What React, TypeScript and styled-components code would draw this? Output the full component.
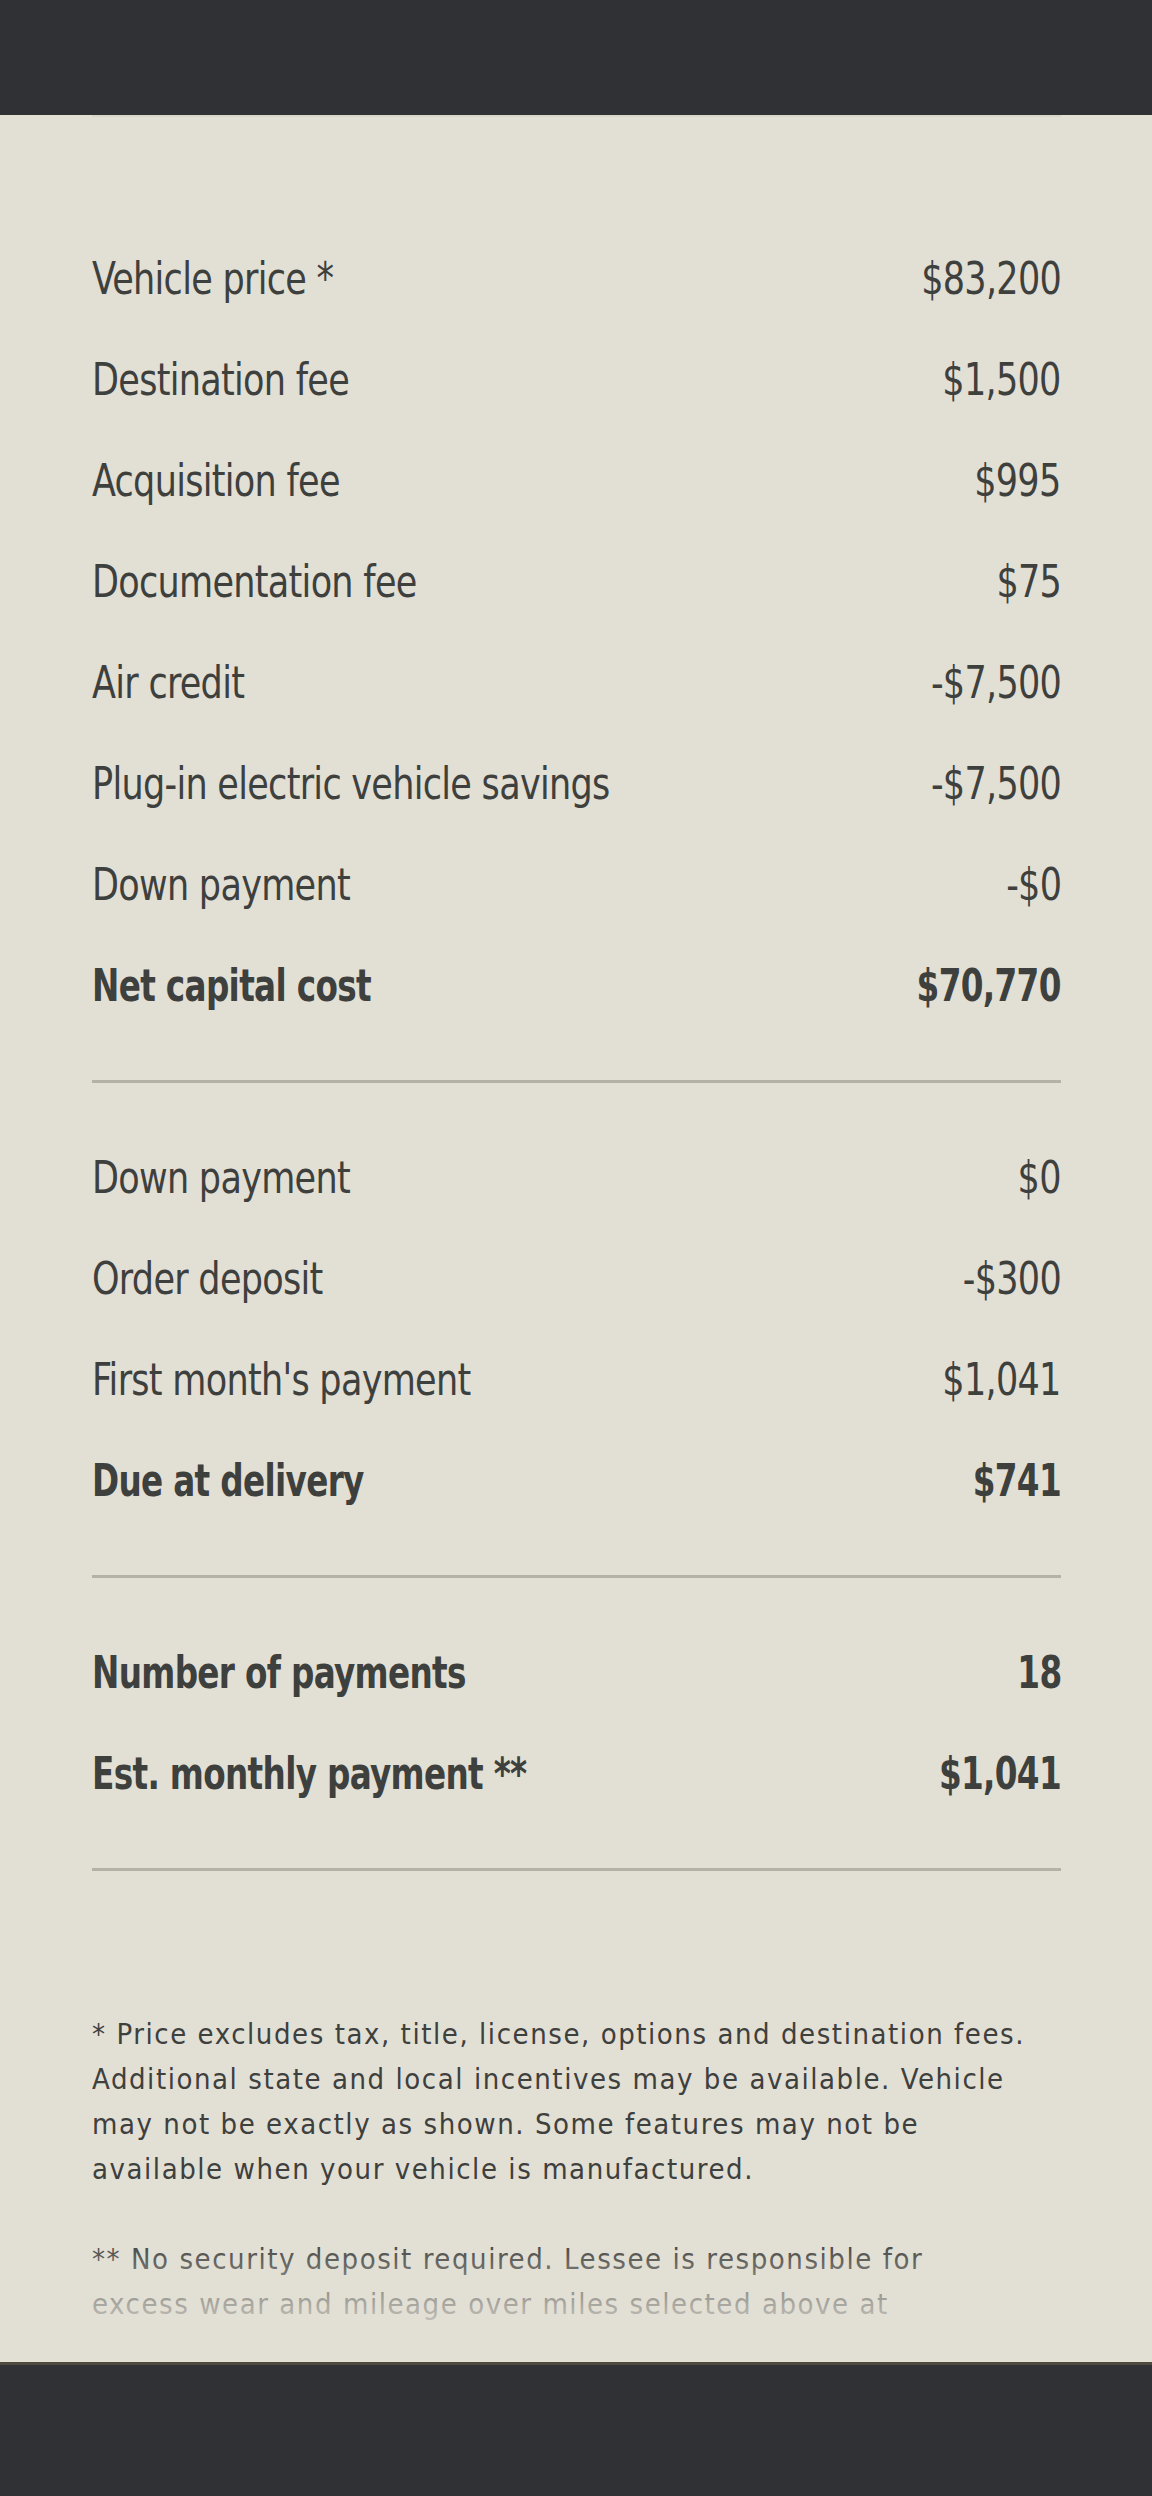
import React from "react";
import styled, { createGlobalStyle } from "styled-components";

const GlobalStyle = createGlobalStyle`
  html, body {
    margin: 0;
    padding: 0;
    background: #e2dfd5;
  }
  * { box-sizing: border-box; }
`;

const FONT = `"Liberation Sans Narrow", "DejaVu Sans Condensed", "Roboto Condensed", "Liberation Sans", sans-serif`;

const Page = styled.div`
  width: 1152px;
  min-height: 2496px;
  display: flex;
  flex-direction: column;
  background: #e2dfd5;
  font-family: ${FONT};
  color: #3e403d;
`;

const TopBar = styled.div`
  height: 115px;
  background: #303135;
  flex-shrink: 0;
`;

const Content = styled.main`
  flex: 1;
  padding: 0 91px 0 92px;
  display: flex;
  flex-direction: column;
`;

const Section = styled.section<{ $first?: boolean }>`
  display: flex;
  flex-direction: column;
  padding: ${(p) => (p.$first ? "111px" : "44px")} 0 44px;
  border-top: ${(p) => (p.$first ? "2px solid #d8d5ca" : "none")};
  border-bottom: 3px solid #b4b2a7;
`;

const Row = styled.div<{ $bold?: boolean }>`
  height: 101px;
  display: flex;
  align-items: center;
  justify-content: space-between;
  font-size: 44px;
  font-weight: ${(p) => (p.$bold ? 700 : 400)};
  letter-spacing: -0.8px;
  line-height: 1;
  white-space: nowrap;
`;

const Label = styled.span<{ $bold?: boolean }>`
  display: inline-block;
  transform: scaleX(${(p) => (p.$bold ? 0.825 : 0.885)});
  transform-origin: left center;
`;

const Value = styled.span<{ $bold?: boolean }>`
  display: inline-block;
  text-align: right;
  transform: scaleX(${(p) => (p.$bold ? 0.825 : 0.885)});
  transform-origin: right center;
`;

const Notes = styled.div`
  position: relative;
  padding-top: 141px;
  height: 488px;
  overflow: hidden;
  font-size: 29px;
  line-height: 45px;
  letter-spacing: 1.55px;
`;

const Note = styled.p`
  margin: 0 0 45px;
  white-space: nowrap;
`;

const Fade = styled.div`
  position: absolute;
  left: 0;
  right: 0;
  bottom: 0;
  height: 120px;
  background: linear-gradient(to bottom, rgba(226, 223, 213, 0) 0%, rgba(226, 223, 213, 0.55) 45%, #e2dfd5 88%);
  pointer-events: none;
`;

const BottomBar = styled.footer`
  height: 134px;
  background: #303135;
  border-top: 3px solid #4f4a3e;
  flex-shrink: 0;
`;

type Item = { label: string; value: string; bold?: boolean };

const capital: Item[] = [
  { label: "Vehicle price *", value: "$83,200" },
  { label: "Destination fee", value: "$1,500" },
  { label: "Acquisition fee", value: "$995" },
  { label: "Documentation fee", value: "$75" },
  { label: "Air credit", value: "-$7,500" },
  { label: "Plug-in electric vehicle savings", value: "-$7,500" },
  { label: "Down payment", value: "-$0" },
  { label: "Net capital cost", value: "$70,770", bold: true },
];

const delivery: Item[] = [
  { label: "Down payment", value: "$0" },
  { label: "Order deposit", value: "-$300" },
  { label: "First month's payment", value: "$1,041" },
  { label: "Due at delivery", value: "$741", bold: true },
];

const payments: Item[] = [
  { label: "Number of payments", value: "18", bold: true },
  { label: "Est. monthly payment **", value: "$1,041", bold: true },
];

const Rows = ({ items }: { items: Item[] }) => (
  <>
    {items.map((it, i) => (
      <Row key={i} $bold={it.bold}>
        <Label $bold={it.bold}>{it.label}</Label>
        <Value $bold={it.bold}>{it.value}</Value>
      </Row>
    ))}
  </>
);

export default function App() {
  return (
    <>
      <GlobalStyle />
      <Page>
        <TopBar />
        <Content>
          <Section $first>
            <Rows items={capital} />
          </Section>
          <Section>
            <Rows items={delivery} />
          </Section>
          <Section>
            <Rows items={payments} />
          </Section>
          <Notes>
            <Note>
              * Price excludes tax, title, license, options and destination fees.
              <br />
              Additional state and local incentives may be available. Vehicle
              <br />
              may not be exactly as shown. Some features may not be
              <br />
              available when your vehicle is manufactured.
            </Note>
            <Note>
              ** No security deposit required. Lessee is responsible for
              <br />
              excess wear and mileage over miles selected above at
            </Note>
            <Fade />
          </Notes>
        </Content>
        <BottomBar />
      </Page>
    </>
  );
}
